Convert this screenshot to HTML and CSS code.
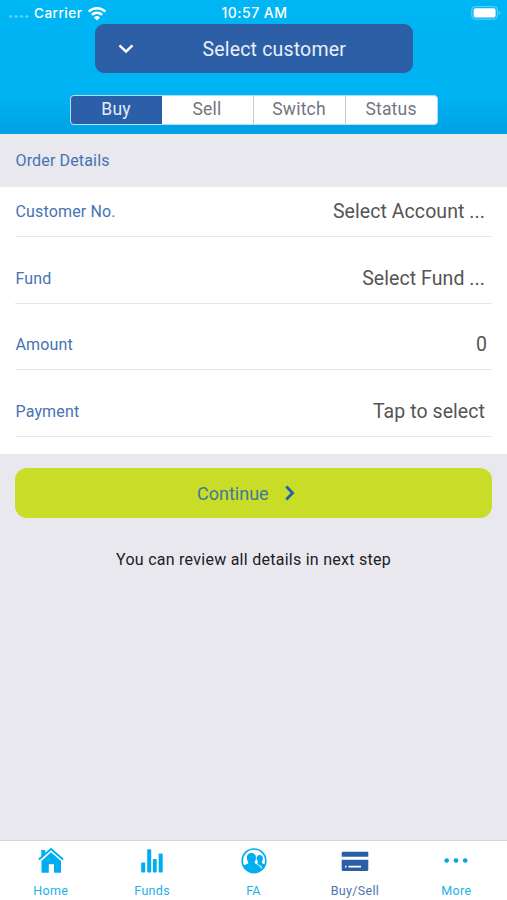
FILE: index.html
```
<!DOCTYPE html>
<html>
<head>
<meta charset="utf-8">
<title>Buy/Sell</title>
<link rel="stylesheet" href="styles.css">
</head>
<body>
<header class="top">
  <div class="status">
    <div class="carrier">
      <i class="signal"></i>
      <span>Carrier</span>
      <svg class="wifi" width="20" height="15" viewBox="0 0 20 15" fill="none" stroke="#fff" stroke-width="2.5">
        <path d="M1.7 5.6a11.7 11.7 0 0 1 16.6 0"/>
        <path d="M4.9 8.8a7.2 7.2 0 0 1 10.2 0"/>
        <path d="M10 14.6l-3-3.1a4.3 4.3 0 0 1 6 0z" fill="#fff" stroke="none"/>
      </svg>
    </div>
    <span class="time">10:57 AM</span>
    <svg class="battery" width="30" height="14" viewBox="0 0 30 14">
      <rect x=".8" y=".6" width="25.6" height="12.6" rx="3.4" fill="none" stroke="#fff" stroke-opacity=".4"/>
      <rect x="2.6" y="2.3" width="22" height="9.2" rx="1.8" fill="#fff"/>
      <path d="M27.9 5q1.4.5 1.4 2t-1.4 2z" fill="#fff" fill-opacity=".4"/>
    </svg>
  </div>
  <button type="button" class="customer">
    <svg width="16" height="10" viewBox="0 0 16 10" fill="none" stroke="#fff" stroke-width="2.5"><path d="M1.5 1.3L8 7.6l6.5-6.3"/></svg>
    <span>Select customer</span>
  </button>
  <nav class="segments">
    <a class="segment active">Buy</a>
    <a class="segment sell">Sell</a>
    <a class="segment">Switch</a>
    <a class="segment">Status</a>
  </nav>
</header>

<main>
  <h2 class="title">Order Details</h2>
  <div class="fields">
    <div class="field"><label>Customer No.</label><span class="value">Select Account ...</span></div>
    <div class="field"><label>Fund</label><span class="value">Select Fund ...</span></div>
    <div class="field"><label>Amount</label><span class="value zero">0</span></div>
    <div class="field"><label>Payment</label><span class="value">Tap to select</span></div>
  </div>
  <button type="button" class="continue">
    <span>Continue</span>
    <svg width="10" height="16" viewBox="0 0 10 16" fill="none" stroke="#2b5fa5" stroke-width="2.8"><path d="M1.3 1.5L7.6 8l-6.3 6.5"/></svg>
  </button>
  <p class="note">You can review all details in next step</p>
</main>

<footer class="tabs">
  <a class="tab">
    <svg width="28" height="28" viewBox="0 0 28 28" fill="#00aeef">
      <path d="M4.3 3h4v4l-4 3.4z"/>
      <path d="M14 5.3L24 13.9V25.8H17V17.2h-5.2v8.6H4.5V13.9z"/>
      <path d="M1.9 12.5L14 2.1l12.1 10.4" fill="none" stroke="#00aeef" stroke-width="2"/>
    </svg>
    <span>Home</span>
  </a>
  <a class="tab">
    <svg width="28" height="28" viewBox="0 0 28 28" fill="#00aeef">
      <rect x="3.2" y="15.6" width="4" height="10" rx=".8"/>
      <rect x="9.2" y="2.2" width="4" height="23.4" rx=".8"/>
      <rect x="14.9" y="12" width="3.8" height="13.6" rx=".8"/>
      <rect x="20.7" y="6.4" width="4" height="19.2" rx=".8"/>
    </svg>
    <span>Funds</span>
  </a>
  <a class="tab">
    <svg width="28" height="28" viewBox="0 0 28 28">
      <circle cx="14" cy="13.8" r="11.8" fill="#fff" stroke="#00aeef" stroke-width="1.7"/>
      <path d="M3 18.6c1.7-1.2 4.2-1.3 5.1-2.4.4-.8-.2-1.7-.7-2.8-1-2-1.100-7.500 4-7.500s5 5.500 4 7.500c-.6 1.100-.9 2-.4 2.800 1 1.200 4 1.500 5.400 4.100l1.600 1.700A12 12 0 0 1 3 18.600z" fill="#00aeef"/>
      <path d="M16.700 12.600c-.6-2.600.6-4.500 3-4.500 3.300 0 3.900 3.800 2.600 6-.6 1.200-.6 1.700.2 2.300l3 1.400-2.500 4c-1.200-2.600-3.600-4-5.800-4.900.9-.7.900-2.300-.5-4.300z" fill="#00aeef"/>
    </svg>
    <span>FA</span>
  </a>
  <a class="tab active">
    <svg width="28" height="28" viewBox="0 0 28 28" fill="#2b5fa5">
      <path d="M2 4.7h24q1.3 0 1.3 1.3v3.7H.7V6Q.7 4.700 2 4.700z"/>
      <path d="M.7 12.700h26.600v10q0 1.400-1.400 1.400H2.100Q.7 24.100.7 22.700z"/>
      <path d="M4 19.600h1.500M7.500 19.600h12.500" stroke="#fff" stroke-width="1.900"/>
    </svg>
    <span>Buy/Sell</span>
  </a>
  <a class="tab">
    <svg width="28" height="28" viewBox="0 0 28 28" fill="#00a4df">
      <circle cx="4.7" cy="13.5" r="2.3"/>
      <circle cx="14" cy="13.5" r="2.3"/>
      <circle cx="23.2" cy="13.5" r="2.3"/>
    </svg>
    <span>More</span>
  </a>
</footer>
</body>
</html>
```

FILE: styles.css
```
* { box-sizing: border-box; }
body { display: flex; flex-direction: column; height: 900px; margin: 0; background: #e9e8ee; font-family: Roboto, "Liberation Sans", sans-serif; }
button { border: 0; font: inherit; }
.top { display: flex; flex-direction: column; align-items: center; height: 134px; background: linear-gradient(#00b5f3 0, #00b3f3 72%, #00a0e4 100%); }

.status { display: grid; grid-template-columns: 1fr auto 1fr; align-items: center; width: 100%; height: 24px; padding: 2px 6px 0 8px; color: #fff; font: 500 13.5px/22px Inter, sans-serif; }
.carrier { display: flex; align-items: center; letter-spacing: .5px; }
.signal { width: 21px; height: 3px; margin: 7px 5px 0 0; background: radial-gradient(circle, rgba(255, 255, 255, .35) 1.3px, transparent 1.7px) 0 0 / 5.4px 3px; }
.wifi { margin-left: 5px; }
.time { font-size: 14px; letter-spacing: .45px; }
.battery { justify-self: end; }

.customer { display: flex; align-items: center; width: 318px; height: 49px; padding: 2px 0 0 23px; border-radius: 9px; background: #2d5fa7; color: #e9f0fa; font-size: 19.5px; letter-spacing: .18px; }
.customer svg { margin: -2px 69px 0 0; }
.segments { display: flex; width: 368px; height: 30px; margin-top: 22px; overflow: hidden; border: 1px solid #b9dcf3; border-radius: 4px; background: #fff; }
.segment { flex: 1; border-left: 1px solid #c9ced3; color: #74757f; font-size: 17.5px; line-height: 26px; letter-spacing: .2px; text-align: center; }
.segment.active { border-left: 0; background: #2b5fa7; color: #e4edf8; }
.segment.sell { border-left: 0; }

.title { height: 53px; margin: 0; padding-left: 15.5px; color: #4673b3; font-size: 16px; font-weight: 400; line-height: 53px; letter-spacing: .15px; }
.fields { height: 267px; padding: 0 15px; background: #fff; }
.field { display: flex; align-items: flex-end; justify-content: space-between; height: 66.6px; padding-bottom: 12px; border-bottom: 1px solid #e7e7e9; line-height: 26px; }
.field:first-child { height: 50px; }
.field label { margin-bottom: -1px; padding-left: .5px; color: #4673b3; font-size: 16px; letter-spacing: .15px; }
.value { margin-bottom: -1px; padding-right: 7px; color: #555; font-size: 19.5px; letter-spacing: .07px; }
.zero { padding-right: 5px; }
.continue { display: flex; align-items: center; width: 477px; height: 50px; margin: 14px 15px 0; padding: 0 0 0 182px; border-radius: 12px; background: #c8dc28; color: #44799a; font-size: 18px; }
.continue svg { margin-left: 16px; }
.note { margin: 31px 0 0; color: #202024; font-size: 16px; line-height: 21px; letter-spacing: .26px; text-align: center; }

.tabs { display: flex; height: 60px; margin-top: auto; border-top: 1px solid #d7d6dc; background: #fff; }
.tab { display: flex; flex: 1; flex-direction: column; align-items: center; padding-top: 6px; color: #22b1e6; font-size: 12.5px; line-height: 16px; letter-spacing: .3px; }
.tab span { margin-top: 8px; }
.tab.active { color: #4c74b0; }
```
